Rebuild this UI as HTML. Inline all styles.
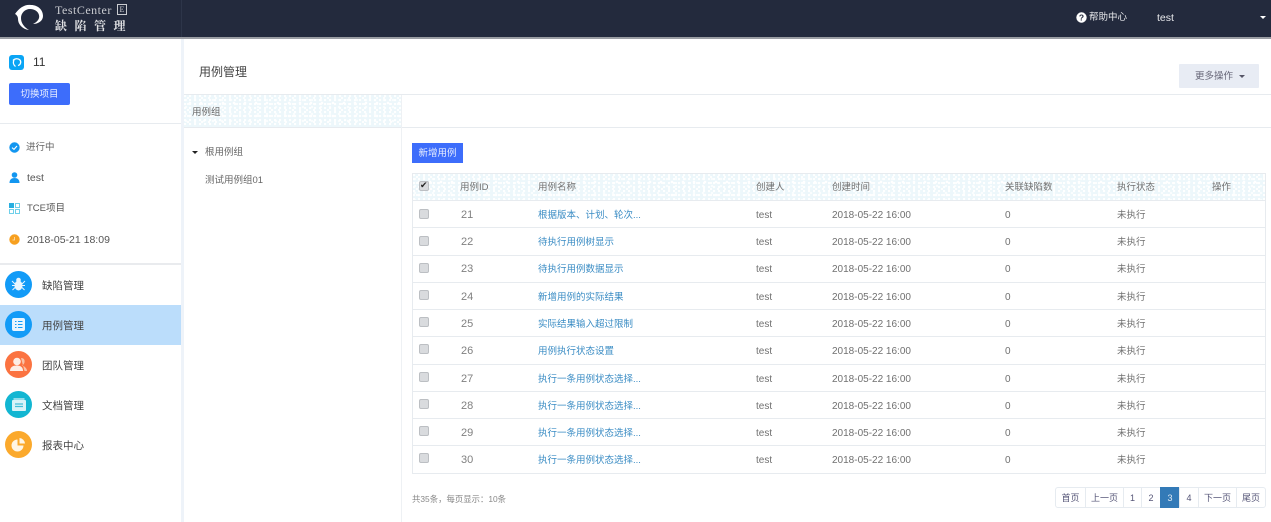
<!DOCTYPE html>
<html lang="zh"><head><meta charset="utf-8"><title>用例管理</title>
<style>
html,body{margin:0;padding:0;background:#fff}
body{width:1271px;height:522px;overflow:hidden;position:relative;font-family:"Liberation Sans","Noto Sans CJK SC",sans-serif;font-size:10px;color:#707070}
.a{position:absolute;white-space:nowrap}
.t{position:absolute;white-space:nowrap;line-height:14px;height:14px;margin-top:2px}
.c{font-size:9.5px}
.n{font-size:11px;color:#808080;margin-top:1px}
.hl{position:absolute;height:1px;background:#e7ebef}
.tex{background-color:#edf7fb;background-image:radial-gradient(circle at 1px 1px,#fff 1px,transparent 1.4px),radial-gradient(circle at 4px 3px,#fff .9px,transparent 1.3px),radial-gradient(circle at 2px 5px,#fafdfe 1px,transparent 1.4px),radial-gradient(circle at 6px 8px,#fff 1.1px,transparent 1.5px);background-size:5px 4px,7px 6px,9px 7px,11px 13px}
.cb{position:absolute;left:419px;width:8px;height:8px;background:#d9dbde;border:1px solid #bcbfc3;border-radius:2px;box-sizing:content-box;margin-top:-.5px}
.ico{position:absolute;left:5px;width:27px;height:27px;border-radius:50%}
.nav{position:absolute;left:42px;font-size:10.5px;color:#444;line-height:14px;margin-top:1px}
.pg{position:absolute;top:487px;height:21px;line-height:21px;text-align:center;border:1px solid #e6ebf0;box-sizing:border-box;color:#557;font-size:9px}
.lnk{color:#3a8cc4;font-size:9.5px}
</style></head><body>

<!-- top bar -->
<div class="a" style="left:0;top:0;width:1271px;height:37px;background:#232a3d"></div>
<div class="a" style="left:0;top:37px;width:1271px;height:2px;background:#9a9da3"></div>
<div class="a" style="left:181px;top:0;width:1px;height:37px;background:#2d3549"></div>
<svg class="a" style="left:0;top:0" width="50" height="37" viewBox="0 0 50 37"><path d="M15 14C19 8 25 4 31 5 38 5 43 10 43 16 43 21 38 24 33 24 37 22 40 19 39 15 38 11 34 9 30 9 25 9 21 13 21 18 21 23 24 27 29 30 22 29 18 24 18 19 18 17 17 15 15 14Z" fill="#fff"/></svg>
<div class="t" style="left:55px;top:3px;margin-top:0;font-family:'Liberation Serif','Noto Serif CJK SC',serif;font-size:12px;color:#c9cbd0;letter-spacing:.5px">TestCenter</div>
<div class="a" style="left:117px;top:4px;width:10px;height:11px;border:1px solid #c9cbd0;box-sizing:border-box;font:8px/9px 'Liberation Serif',serif;color:#c9cbd0;text-align:center">E</div>
<div class="t" style="left:55px;top:19px;margin-top:0;font-family:'Noto Serif CJK SC',serif;font-size:12px;font-weight:700;color:#dfe0e3;letter-spacing:7.500px">缺陷管理</div>
<svg class="a" style="left:1076px;top:12px" width="11" height="11" viewBox="0 0 11 11"><circle cx="5.500" cy="5.500" r="5.200" fill="#fff"/><text x="5.500" y="8.500" text-anchor="middle" font-size="8.500" font-weight="bold" fill="#232a3d" font-family="Liberation Sans">?</text></svg>
<div class="t" style="left:1089px;top:9px;color:#e8e9ec;font-size:9.500px">帮助中心</div>
<div class="t" style="left:1157px;top:9px;color:#e8e9ec;font-size:10.500px">test</div>
<div class="a" style="left:1260px;top:16px;border:3px solid transparent;border-top:3px solid #fff;border-bottom:0"></div>

<!-- sidebar -->
<div class="a" style="left:181px;top:39px;width:3px;height:483px;background:#eef3f9"></div>
<div class="a" style="left:9px;top:55px;width:15px;height:15px;background:#0aa5f5;border-radius:3px"></div>
<svg class="a" style="left:9px;top:55px" width="15" height="15" viewBox="0 0 15 15"><path d="M4 5.500C5.500 3.500 9 3 11 5 12.500 7 11.500 10 9 10.500M5 5C3.800 7.500 4.500 10 6.500 11.500" fill="none" stroke="#fff" stroke-width="1.300"/></svg>
<div class="t" style="left:33px;top:53px;font-size:12px;color:#333">11</div>
<div class="a" style="left:9px;top:83px;width:61px;height:22px;background:#3d6dfb;border-radius:2px;color:#e8eeff;text-align:center;line-height:24px;font-size:9.500px">切换项目</div>
<div class="hl" style="left:0;top:123px;width:181px"></div>

<svg class="a" style="left:9px;top:142px" width="11" height="11" viewBox="0 0 11 11"><circle cx="5.500" cy="5.500" r="5.200" fill="#1296f0"/><path d="M3 5.600 5 7.400 8 4" fill="none" stroke="#fff" stroke-width="1.100"/></svg>
<div class="t c" style="left:26px;top:139px;color:#666">进行中</div>
<svg class="a" style="left:9px;top:172px" width="11" height="11" viewBox="0 0 11 11"><circle cx="5.500" cy="3" r="2.800" fill="#1296f0"/><path d="M.5 11C.5 7.500 2.500 6 5.500 6S10.500 7.500 10.500 11Z" fill="#1296f0"/></svg>
<div class="t" style="left:27px;top:169px;color:#555;font-size:10.500px">test</div>
<svg class="a" style="left:9px;top:203px" width="11" height="11" viewBox="0 0 11 11"><rect x="0" y="0" width="5" height="5" fill="#27aee0"/><rect x="6.500" y=".5" width="4" height="4" fill="none" stroke="#6fd0ea"/><rect x=".5" y="6.500" width="4" height="4" fill="none" stroke="#6fd0ea"/><rect x="6.500" y="6.500" width="4" height="4" fill="none" stroke="#6fd0ea"/></svg>
<div class="t c" style="left:27px;top:200px;color:#555">TCE项目</div>
<svg class="a" style="left:9px;top:234px" width="11" height="11" viewBox="0 0 11 11"><circle cx="5.500" cy="5.500" r="5.200" fill="#f7a020"/><path d="M5.500 3V6H3.500" fill="none" stroke="#fde2b5" stroke-width=".8"/></svg>
<div class="t" style="left:27px;top:231px;color:#555;font-size:10.500px">2018-05-21 18:09</div>
<div class="a" style="left:0;top:263px;width:181px;height:2px;background:#e9ebee"></div>

<div class="a" style="left:0;top:305px;width:181px;height:40px;background:#bbddfb"></div>
<div class="ico" style="top:271px;background:#129bf7"></div>
<svg class="a" style="left:11px;top:277px" width="15" height="15" viewBox="0 0 15 15" fill="#e8f5fe"><ellipse cx="7.500" cy="8.500" rx="4" ry="5"/><circle cx="7.500" cy="3" r="2.300"/><path d="M1 4 4 7M14 4 11 7M1 8.500H4M14 8.500H11M1.500 13 4 10.500M13.500 13 11 10.500" stroke="#e8f5fe" stroke-width="1"/></svg>
<div class="nav" style="top:278px">缺陷管理</div>
<div class="ico" style="top:311px;background:#129bf7"></div>
<svg class="a" style="left:12px;top:318px" width="13" height="13" viewBox="0 0 13 13"><rect width="13" height="13" rx="2" fill="#e8f5fe"/><path d="M3 3.500H4.500M6 3.500H10.500M3 6.500H4.500M6 6.500H10.500M3 9.500H4.500M6 9.500H10.500" stroke="#129bf7" stroke-width="1"/></svg>
<div class="nav" style="top:318px">用例管理</div>
<div class="ico" style="top:351px;background:#fb7341"></div>
<svg class="a" style="left:10px;top:357px" width="18" height="15" viewBox="0 0 18 15"><circle cx="7" cy="4.500" r="3.800" fill="#fdeee6"/><path d="M0 14C0 10 3 8.500 7 8.500S13 10.500 13 14Z" fill="#fdeee6"/><path d="M11 1C14 1 15 3 14.500 5.500 14 7.500 12.500 8 12 8.500 14 9 17 11 17 14H14.500" fill="#f9c3a8"/></svg>
<div class="nav" style="top:358px">团队管理</div>
<div class="ico" style="top:391px;background:#12b6d2"></div>
<svg class="a" style="left:12px;top:398px" width="14" height="13" viewBox="0 0 14 13"><rect y="2" width="14" height="11" rx="1" fill="#d8f3f8"/><path d="M1.500 0H12.500V2H1.500Z" fill="#8fdcea"/><path d="M3 6H11M3 8.500H11" stroke="#45bfd8" stroke-width="1.200"/></svg>
<div class="nav" style="top:398px">文档管理</div>
<div class="ico" style="top:431px;background:#fba92c"></div>
<svg class="a" style="left:11px;top:437px" width="15" height="15" viewBox="0 0 15 15"><path d="M6.500 2.500V8.500H12.500A6 6 0 1 1 6.500 2.500Z" fill="#fff6e6"/><path d="M8.500 1A6 6 0 0 1 14 6.500H8.500Z" fill="#fff6e6"/></svg>
<div class="nav" style="top:438px">报表中心</div>

<!-- main header -->
<div class="t" style="left:199px;top:63px;font-size:12px;color:#444">用例管理</div>
<div class="a" style="left:1179px;top:64px;width:80px;height:24px;background:#e8ecf4;border-radius:1px"></div>
<div class="t c" style="left:1195px;top:68px;color:#667">更多操作</div>
<div class="a" style="left:1239px;top:75px;border:3px solid transparent;border-top:3px solid #556;border-bottom:0"></div>
<div class="hl" style="left:184px;top:94px;width:1087px"></div>
<div class="a tex" style="left:184px;top:95px;width:217px;height:32px"></div>
<div class="t c" style="left:192px;top:104px;color:#666">用例组</div>
<div class="hl" style="left:184px;top:127px;width:1087px"></div>
<div class="a" style="left:401px;top:95px;width:1px;height:427px;background:#eef1f4"></div>

<div class="a" style="left:192px;top:151px;border:3px solid transparent;border-top:3px solid #222;border-bottom:0"></div>
<div class="t c" style="left:205px;top:144px;color:#666">根用例组</div>
<div class="t c" style="left:205px;top:172px;color:#666">测试用例组01</div>

<div class="a" style="left:412px;top:143px;width:51px;height:20px;background:#3d6dfb;color:#e8eeff;text-align:center;line-height:22px;font-size:9.500px">新增用例</div>

<!-- table -->
<div class="a tex" style="left:413px;top:174px;width:853px;height:27px"></div>
<div class="hl" style="left:412px;top:173px;width:854px"></div>
<div class="a" style="left:412px;top:173px;width:1px;height:301px;background:#e7ebef"></div>
<div class="a" style="left:1265px;top:173px;width:1px;height:301px;background:#e7ebef"></div>
<div class="cb" style="top:181px"></div>
<div class="a" style="left:420px;top:180px;font-size:9px;color:#222;line-height:10px">✔</div>
<div class="t c" style="left:460px;top:179px">用例ID</div>
<div class="t c" style="left:538px;top:179px">用例名称</div>
<div class="t c" style="left:756px;top:179px">创建人</div>
<div class="t c" style="left:832px;top:179px">创建时间</div>
<div class="t c" style="left:1005px;top:179px">关联缺陷数</div>
<div class="t c" style="left:1117px;top:179px">执行状态</div>
<div class="t c" style="left:1212px;top:179px">操作</div>

<div class="hl" style="left:412px;top:200px;width:854px"></div>
<div class="cb" style="top:209px"></div><div class="t n" style="left:461px;top:207px">21</div><div class="t lnk" style="left:538px;top:207px">根据版本、计划、轮次...</div><div class="t" style="left:756px;top:207px">test</div><div class="t" style="left:832px;top:207px">2018-05-22 16:00</div><div class="t" style="left:1005px;top:207px">0</div><div class="t c" style="left:1117px;top:207px">未执行</div>
<div class="hl" style="left:412px;top:227px;width:854px"></div>
<div class="cb" style="top:236px"></div><div class="t n" style="left:461px;top:234px">22</div><div class="t lnk" style="left:538px;top:234px">待执行用例树显示</div><div class="t" style="left:756px;top:234px">test</div><div class="t" style="left:832px;top:234px">2018-05-22 16:00</div><div class="t" style="left:1005px;top:234px">0</div><div class="t c" style="left:1117px;top:234px">未执行</div>
<div class="hl" style="left:412px;top:255px;width:854px"></div>
<div class="cb" style="top:263px"></div><div class="t n" style="left:461px;top:261px">23</div><div class="t lnk" style="left:538px;top:261px">待执行用例数据显示</div><div class="t" style="left:756px;top:261px">test</div><div class="t" style="left:832px;top:261px">2018-05-22 16:00</div><div class="t" style="left:1005px;top:261px">0</div><div class="t c" style="left:1117px;top:261px">未执行</div>
<div class="hl" style="left:412px;top:282px;width:854px"></div>
<div class="cb" style="top:290px"></div><div class="t n" style="left:461px;top:289px">24</div><div class="t lnk" style="left:538px;top:289px">新增用例的实际结果</div><div class="t" style="left:756px;top:289px">test</div><div class="t" style="left:832px;top:289px">2018-05-22 16:00</div><div class="t" style="left:1005px;top:289px">0</div><div class="t c" style="left:1117px;top:289px">未执行</div>
<div class="hl" style="left:412px;top:309px;width:854px"></div>
<div class="cb" style="top:317px"></div><div class="t n" style="left:461px;top:316px">25</div><div class="t lnk" style="left:538px;top:316px">实际结果输入超过限制</div><div class="t" style="left:756px;top:316px">test</div><div class="t" style="left:832px;top:316px">2018-05-22 16:00</div><div class="t" style="left:1005px;top:316px">0</div><div class="t c" style="left:1117px;top:316px">未执行</div>
<div class="hl" style="left:412px;top:336px;width:854px"></div>
<div class="cb" style="top:344px"></div><div class="t n" style="left:461px;top:343px">26</div><div class="t lnk" style="left:538px;top:343px">用例执行状态设置</div><div class="t" style="left:756px;top:343px">test</div><div class="t" style="left:832px;top:343px">2018-05-22 16:00</div><div class="t" style="left:1005px;top:343px">0</div><div class="t c" style="left:1117px;top:343px">未执行</div>
<div class="hl" style="left:412px;top:364px;width:854px"></div>
<div class="cb" style="top:372px"></div><div class="t n" style="left:461px;top:371px">27</div><div class="t lnk" style="left:538px;top:371px">执行一条用例状态选择...</div><div class="t" style="left:756px;top:371px">test</div><div class="t" style="left:832px;top:371px">2018-05-22 16:00</div><div class="t" style="left:1005px;top:371px">0</div><div class="t c" style="left:1117px;top:371px">未执行</div>
<div class="hl" style="left:412px;top:391px;width:854px"></div>
<div class="cb" style="top:399px"></div><div class="t n" style="left:461px;top:398px">28</div><div class="t lnk" style="left:538px;top:398px">执行一条用例状态选择...</div><div class="t" style="left:756px;top:398px">test</div><div class="t" style="left:832px;top:398px">2018-05-22 16:00</div><div class="t" style="left:1005px;top:398px">0</div><div class="t c" style="left:1117px;top:398px">未执行</div>
<div class="hl" style="left:412px;top:418px;width:854px"></div>
<div class="cb" style="top:426px"></div><div class="t n" style="left:461px;top:425px">29</div><div class="t lnk" style="left:538px;top:425px">执行一条用例状态选择...</div><div class="t" style="left:756px;top:425px">test</div><div class="t" style="left:832px;top:425px">2018-05-22 16:00</div><div class="t" style="left:1005px;top:425px">0</div><div class="t c" style="left:1117px;top:425px">未执行</div>
<div class="hl" style="left:412px;top:445px;width:854px"></div>
<div class="cb" style="top:453px"></div><div class="t n" style="left:461px;top:452px">30</div><div class="t lnk" style="left:538px;top:452px">执行一条用例状态选择...</div><div class="t" style="left:756px;top:452px">test</div><div class="t" style="left:832px;top:452px">2018-05-22 16:00</div><div class="t" style="left:1005px;top:452px">0</div><div class="t c" style="left:1117px;top:452px">未执行</div>
<div class="hl" style="left:412px;top:473px;width:854px"></div>

<div class="t" style="left:412px;top:490px;font-size:8.400px;color:#888">共35条，每页显示：10条</div>

<div class="pg" style="left:1055px;width:31px;border-radius:3px 0 0 3px">首页</div>
<div class="pg" style="left:1085px;width:39px">上一页</div>
<div class="pg" style="left:1123px;width:19px">1</div>
<div class="pg" style="left:1141px;width:20px">2</div>
<div class="pg" style="left:1160px;width:20px;background:#337ab7;border-color:#337ab7;color:#dfeaf4">3</div>
<div class="pg" style="left:1179px;width:20px">4</div>
<div class="pg" style="left:1198px;width:39px">下一页</div>
<div class="pg" style="left:1236px;width:30px;border-radius:0 3px 3px 0">尾页</div>
</body></html>
